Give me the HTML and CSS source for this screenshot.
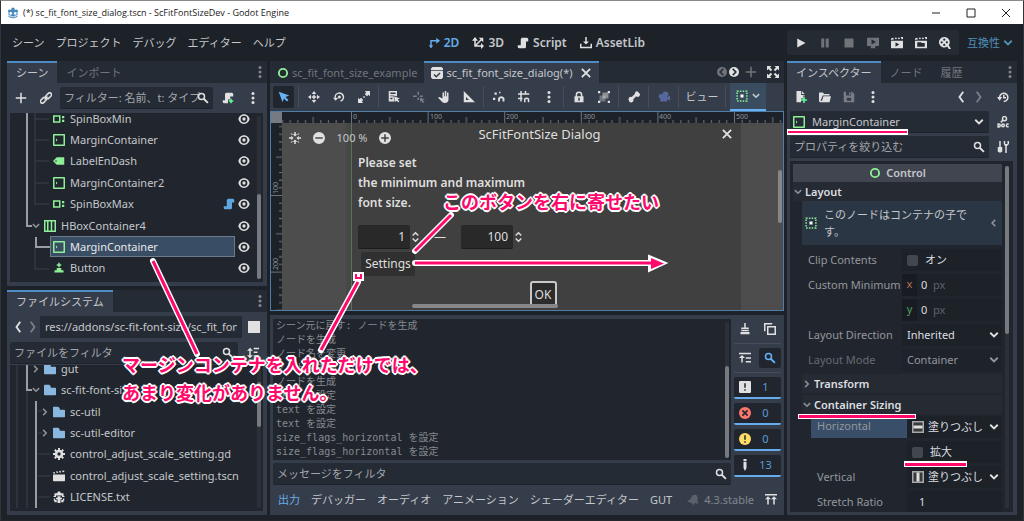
FILE: index.html
```html
<!DOCTYPE html>
<html lang="ja">
<head>
    <meta charset="UTF-8">
    <meta name="viewport" content="width=device-width, initial-scale=1.0">
    <title>(*) sc_fit_font_size_dialog.tscn - ScFitFontSizeDev - Godot Engine</title>
    <link rel="stylesheet" href="styles.css">
</head>
<body>
    <!-- icon sprite -->
    <svg class="sprite" aria-hidden="true">
        <symbol id="godot" viewBox="0 0 16 16"><path fill="#478cbf" d="M1 5l2-2 1 1 2-1V1h4v2l2 1 1-1 2 2-1 2v6q-6 4-12 0V7z"/><circle cx="5" cy="8.500" r="1.800" fill="#fff"/><circle cx="11" cy="8.500" r="1.800" fill="#fff"/><path stroke="#fff" d="M1.500 11.500h3v1.500h7v-1.500h3" fill="none"/></symbol>
        <symbol id="plus" viewBox="0 0 16 16"><path d="M7 1h2v6h6v2H9v6H7V9H1V7h6z"/></symbol>
        <symbol id="link" viewBox="0 0 16 16"><g fill="none" stroke="currentColor" stroke-width="2"><rect x="7" y="2.500" width="9" height="5" rx="2.500" transform="rotate(-45 11.500 5)"/><rect x="0" y="8.500" width="9" height="5" rx="2.500" transform="rotate(-45 4.500 11)"/><path d="M6 10l4-4"/></g></symbol>
        <symbol id="search" viewBox="0 0 16 16"><circle cx="6" cy="6" r="4" fill="none" stroke="currentColor" stroke-width="2"/><path d="M9 9l5.500 5.500" stroke="currentColor" stroke-width="2.500"/></symbol>
        <symbol id="dots" viewBox="0 0 16 16"><circle cx="8" cy="2" r="2"/><circle cx="8" cy="8" r="2"/><circle cx="8" cy="14" r="2"/></symbol>
        <symbol id="script" viewBox="0 0 16 16"><path d="M6 1v1a1 1 0 0 0-1 1v8H1v2a2 2 0 0 0 2 2h7a2 2 0 0 0 2-2V6h3V3a2 2 0 0 0-2-2z"/></symbol>
        <symbol id="script-add" viewBox="0 0 16 16"><path d="M6 1a2 2 0 0 0-2 2v8H1v2a2 2 0 0 0 2 2h5v-5h3V6h4V3a2 2 0 0 0-2-2z"/><path fill="#5fff97" d="M11 9h2v2h2v2h-2v2h-2v-2H9v-2h2z"/></symbol>
        <symbol id="eye" viewBox="0 0 16 16"><path fill-rule="evenodd" d="M8 1.500C4 1.500 1 5 .500 8 1 11 4 14.500 8 14.500s7-3.500 7.500-6.500C15 5 12 1.500 8 1.500zm0 2a4.500 4.500 0 0 1 0 9 4.500 4.500 0 0 1 0-9z"/><circle cx="8" cy="8" r="2.200"/></symbol>
        <symbol id="spinbox" viewBox="0 0 16 16"><path fill-rule="evenodd" d="M0 3v10h10V3zm2 2h6v6H2zM12 4h3v3h-3zM12 9h3v3h-3z"/></symbol>
        <symbol id="margin" viewBox="0 0 16 16"><path fill-rule="evenodd" d="M1 0Q0 0 0 1v14q0 1 1 1h14q1 0 1-1V1q0-1-1-1zm1 2h12v12H2zM4 6v4l2-2z"/></symbol>
        <symbol id="label" viewBox="0 0 16 16"><path fill-rule="evenodd" d="M5 3L0 8l5 5h10V3zM4 7a1 1 0 0 1 0 2 1 1 0 0 1 0-2z"/></symbol>
        <symbol id="hbox" viewBox="0 0 16 16"><path fill-rule="evenodd" d="M0 0v16h16V0zm2 2h2v12H2zm4 0h3v12H6zm5 0h3v12h-3z"/></symbol>
        <symbol id="button" viewBox="0 0 16 16"><path d="M7 1h2v2h2v2H9v2H7V5H5V3h2zM5 8h6v3h3v3H2v-3h3z"/></symbol>
        <symbol id="down" viewBox="0 0 16 16"><path d="M3 5l5 5 5-5" fill="none" stroke="currentColor" stroke-width="2.500"/></symbol>
        <symbol id="right" viewBox="0 0 16 16"><path d="M5 3l5 5-5 5" fill="none" stroke="currentColor" stroke-width="2.500"/></symbol>
        <symbol id="left" viewBox="0 0 16 16"><path d="M10 3L5 8l5 5" fill="none" stroke="currentColor" stroke-width="2.500"/></symbol>
        <symbol id="prev" viewBox="0 0 16 16"><path d="M11 1L6 8l5 7" fill="none" stroke="currentColor" stroke-width="2.500"/></symbol>
        <symbol id="next" viewBox="0 0 16 16"><path d="M5 1l5 7-5 7" fill="none" stroke="currentColor" stroke-width="2.500"/></symbol>
        <symbol id="square" viewBox="0 0 16 16"><path d="M0 0h16v16H0z"/></symbol>
        <symbol id="sort" viewBox="0 0 16 16"><path d="M4 1L0 5h3v6H0l4 4 4-4H5V5h3zM9 1h7v2H9zM9 6h5v2H9zM9 11h3v2H9z"/></symbol>
        <symbol id="folder" viewBox="0 0 16 16"><path d="M1 1Q0 1 0 2v12q0 1 1 1h14q1 0 1-1V6q0-1-1-1H9V3L7 1z"/></symbol>
        <symbol id="gear" viewBox="0 0 16 16"><circle cx="8" cy="8" r="4" fill="none" stroke="currentColor" stroke-width="3.500"/><path d="M8 0v3M8 13v3M0 8h3M13 8h3M2.300 2.300l2 2M11.700 11.700l2 2M2.300 13.700l2-2M11.700 4.300l2-2" stroke="currentColor" stroke-width="2.600"/></symbol>
        <symbol id="clapper" viewBox="0 0 16 16"><path d="M0 3l2-.5L3 4.500 1 5zM4 2l2-.5 1 2-2 .5zM8 1.500l2-.5 1 2-2 .5zM12 1l3-.5v2l-2 .5zM0 6h16v8q0 1-1 1H1q-1 0-1-1z"/></symbol>
        <symbol id="text" viewBox="0 0 16 16"><path d="M8 0L5 3H2v3L0 8h4V6h8v2h4l-2-2V3h-3zM6 7h4v2h2v2h-2v5H6v-5H4V9h2zM1 10h2v2h2v3H2v-2H1zM13 10h2v3h-1v2h-3v-3h2z"/></symbol>
        <symbol id="two-d" viewBox="0 0 16 16"><path d="M4 14V5h8" fill="none" stroke="currentColor" stroke-width="2"/><path d="M1 11h6l-3 4zM11 1l5 4-5 4z"/></symbol>
        <symbol id="three-d" viewBox="0 0 16 16"><path d="M4 3v9h9M4 12l9-9" fill="none" stroke="currentColor" stroke-width="2"/><path d="M0 5l4-5 4 5zM12 8l4 4-4 4zM9 1h6v6z"/></symbol>
        <symbol id="asset" viewBox="0 0 16 16"><path d="M7 0h2v6h3l-4 4-4-4h3zM0 9h2v4h12V9h2v6H0z"/></symbol>
        <symbol id="play" viewBox="0 0 16 16"><path d="M3 2v12l11-6z"/></symbol>
        <symbol id="pause" viewBox="0 0 16 16"><path d="M3 2h4v12H3zM9 2h4v12H9z"/></symbol>
        <symbol id="stop" viewBox="0 0 16 16"><path d="M2 2h12v12H2z"/></symbol>
        <symbol id="remote" viewBox="0 0 16 16"><path d="M0 1h16v11H0z"/><path d="M6 3l6 3.500L6 10z" fill="#252b33"/><path d="M5 12h6v3H5z"/></symbol>
        <symbol id="play-scene" viewBox="0 0 16 16"><path fill-rule="evenodd" d="M0 2l3-1 1 2-4 1zM5 1l2-.5 1 2-2 .5zM9 1l2-.5 1 2-2 .5zM13 0l3-.5v3l-2 .5zM0 5h16v10H0zm6 2v6l5-3z"/></symbol>
        <symbol id="play-custom" viewBox="0 0 16 16"><path fill-rule="evenodd" d="M0 2l3-1 1 2-4 1zM5 1l2-.5 1 2-2 .5zM9 1l2-.5 1 2-2 .5zM13 0l3-.5v3l-2 .5zM0 5h16v10H0zm3 2v6h10V8H9L8 7z"/></symbol>
        <symbol id="movie" viewBox="0 0 16 16"><path fill-rule="evenodd" d="M7 0a7 7 0 1 0 4 12.700l2 3.300h3l-3-5A7 7 0 0 0 7 0zm0 2a1.500 1.500 0 0 1 0 3 1.500 1.500 0 0 1 0-3zM3.500 5.500a1.500 1.500 0 0 1 0 3 1.500 1.500 0 0 1 0-3zm7 0a1.500 1.500 0 0 1 0 3 1.500 1.500 0 0 1 0-3zM7 9a1.500 1.500 0 0 1 0 3 1.500 1.500 0 0 1 0-3z"/></symbol>
        <symbol id="ring" viewBox="0 0 16 16"><circle cx="8" cy="8" r="5.500" fill="none" stroke="currentColor" stroke-width="2.500"/></symbol>
        <symbol id="dialog" viewBox="0 0 16 16"><path d="M2 0h12l2 2v2H0V2zM0 5h16v9l-2 2H2l-2-2z"/><path d="M4 10l3 3 5-5" fill="none" stroke="#363d4a" stroke-width="2"/></symbol>
        <symbol id="close" viewBox="0 0 16 16"><path d="M2.500 2.500l11 11M13.500 2.500l-11 11" stroke="currentColor" stroke-width="2.500"/></symbol>
        <symbol id="c-left" viewBox="0 0 16 16"><circle cx="8" cy="8" r="8"/><path d="M10 3L5 8l5 5" fill="none" stroke="#252b34" stroke-width="2.500"/></symbol>
        <symbol id="c-right" viewBox="0 0 16 16"><circle cx="8" cy="8" r="8"/><path d="M6 3l5 5-5 5" fill="none" stroke="#252b34" stroke-width="2.500"/></symbol>
        <symbol id="full" viewBox="0 0 16 16"><path d="M0 0h6L4 2l3 3-2 2-3-3-2 2zM16 0v6l-2-2-3 3-2-2 3-3-2-2zM0 16v-6l2 2 3-3 2 2-3 3 2 2zM16 16h-6l2-2-3-3 2-2 3 3 2-2z"/></symbol>
        <symbol id="cursor" viewBox="0 0 16 16"><path d="M1 1l14 5-5 2 4 4-2 2-4-4-2 5z"/></symbol>
        <symbol id="move" viewBox="0 0 16 16"><path d="M8 0l3 4H5zM8 16l-3-4h6zM0 8l4-3v6zM16 8l-4 3V5zM7 5h2v6H7zM5 7h6v2H5z"/></symbol>
        <symbol id="rotate" viewBox="0 0 16 16"><path d="M3 9a5.500 5.500 0 1 1 7 4.500" fill="none" stroke="currentColor" stroke-width="2"/><path d="M0 9h7l-3.500 4z"/><circle cx="8.500" cy="8" r="2"/></symbol>
        <symbol id="scale" viewBox="0 0 16 16"><path d="M9 0h7v7l-2-2-2 2-3-3 2-2zM0 16V9l2 2 2-2 3 3-2 2 2 2zM7 7h2v2H7z"/></symbol>
        <symbol id="list" viewBox="0 0 16 16"><path fill-rule="evenodd" d="M1 0h11v7L7 6l2 8H1zm2 2v2h7V2zm0 4v1h4V6zm0 3v2h3V9zM8 7l8 3-3 1 2 3-1 1-3-2-1 2z"/></symbol>
        <symbol id="pivot" viewBox="0 0 16 16"><path d="M6 1h2v4H6zM0 6h5v2H0zM9 6h4v2H9zM6 9h2v3H6zM9 9l7 2-3 1 2 3-2 1-2-3-1 2z"/></symbol>
        <symbol id="hand" viewBox="0 0 16 16"><path d="M6 2h2v5h1V0h2v7h1V2h2v9q0 5-5 5-3 0-5-3L0 9l2-1 4 2z"/></symbol>
        <symbol id="ruler" viewBox="0 0 16 16"><path fill-rule="evenodd" d="M1 0v15h15zm3 8l4 4H4z"/></symbol>
        <symbol id="snap" viewBox="0 0 16 16"><path d="M2 2h3v3H2zM0 9h3v3H0zM8 1h2v2H8z"/><path d="M8 14v-4a3.500 3.500 0 0 1 6 0v4" fill="none" stroke="currentColor" stroke-width="2.500"/></symbol>
        <symbol id="grid" viewBox="0 0 16 16"><path d="M4 0v14M10 0v5M0 4h15M0 10h6M9 15v-4a3 3 0 0 1 5 0v4" fill="none" stroke="currentColor" stroke-width="2"/></symbol>
        <symbol id="lock" viewBox="0 0 16 16"><path d="M4.500 8V5a3.500 3.500 0 0 1 7 0v3" fill="none" stroke="currentColor" stroke-width="2"/><path fill-rule="evenodd" d="M2 7h12v8H2zm5 2v4h2V9z"/></symbol>
        <symbol id="group" viewBox="0 0 16 16"><path d="M0 0h3v3H0zM13 0h3v3h-3zM0 13h3v3H0zM13 13h3v3h-3z"/><path opacity=".35" d="M2 6h8v8H2z"/><path opacity=".5" d="M6 2h8v8H6z"/></symbol>
        <symbol id="bone" viewBox="0 0 16 16"><path d="M10 1a3 3 0 0 1 4 1 3 3 0 0 1 1 5 3 3 0 0 1-4 0l-4 4a3 3 0 0 1-4 4 3 3 0 0 1-2-3 3 3 0 0 1 4-4l4-4z"/></symbol>
        <symbol id="camera" viewBox="0 0 16 16"><path d="M9 1a3 3 0 0 1 3 6v1l4-2v7l-4-2v3H3v-4a3 3 0 1 1 3-5 3 3 0 0 1 3-4z"/></symbol>
        <symbol id="anchor" viewBox="0 0 16 16"><path d="M1.500 1.500h13v13h-13z" fill="none" stroke="#8eef97" stroke-width="2" stroke-dasharray="2 1.700"/><path fill="#fff" d="M6 6h4v4H6z"/></symbol>
        <symbol id="center" viewBox="0 0 16 16"><path d="M0 7h3V5l3 3-3 3V9H0zM16 7h-3V5l-3 3 3 3V9h3zM7 0h2v3h2L8 6 5 3h2zM7 16h2v-3h2l-3-3-3 3h2zM2 2h2l1 2H4zM14 2h-2l-1 2h1zM2 14h2l1-2H4zM14 14h-2l-1-2h1z"/></symbol>
        <symbol id="minus-c" viewBox="0 0 16 16"><path fill-rule="evenodd" d="M8 0a8 8 0 0 0 0 16A8 8 0 0 0 8 0zM3 7h10v2H3z"/></symbol>
        <symbol id="plus-c" viewBox="0 0 16 16"><path fill-rule="evenodd" d="M8 0a8 8 0 0 0 0 16A8 8 0 0 0 8 0zM7 3h2v4h4v2H9v4H7V9H3V7h4z"/></symbol>
        <symbol id="updown" viewBox="0 0 10 16"><path d="M1 6l4-4 4 4M1 10l4 4 4-4" fill="none" stroke="currentColor" stroke-width="2"/></symbol>
        <symbol id="broom" viewBox="0 0 16 16"><path d="M7 0h2v6h4v2H3V6h4zM3 9h10v2H3zM2 12h12v3H2z"/></symbol>
        <symbol id="copy" viewBox="0 0 16 16"><path d="M1 11V1h10M5 5h10v10H5z" fill="none" stroke="currentColor" stroke-width="2"/></symbol>
        <symbol id="collapse" viewBox="0 0 16 16"><path d="M0 1h16v2H0zM4 4l4 4H5v6H3V8H0zM9 7h7v2H9zM9 12h7v2H9z"/></symbol>
        <symbol id="msg" viewBox="0 0 16 16"><path fill-rule="evenodd" d="M1 0h14l1 1v14l-1 1H1l-1-1V1zm6 3v6h2V3zm0 8v2h2v-2z"/></symbol>
        <symbol id="err" viewBox="0 0 16 16"><circle cx="8" cy="8" r="8" fill="#ff786b"/><path d="M4.500 4.500l7 7M11.500 4.500l-7 7" stroke="#21262e" stroke-width="2.200"/></symbol>
        <symbol id="warn" viewBox="0 0 16 16"><circle cx="8" cy="8" r="8" fill="#ffdd65"/><path d="M7 3h2v6H7zM7 11h2v2H7z" fill="#21262e"/></symbol>
        <symbol id="info" viewBox="0 0 16 16"><path d="M6 0h4v3H6zM6 4h4v8l-2 4-2-4z"/></symbol>
        <symbol id="bell" viewBox="0 0 16 16"><path d="M7 2q6-3 7 2v5l1 4-5-1-1 3-3-3-6-2q5-2 7-8z"/></symbol>
        <symbol id="expand" viewBox="0 0 16 16"><path d="M0 0h16v2H0zM4 3l4 4H5v7H3V7H0zM12 3l4 4h-3v7h-2V7H8z"/></symbol>
        <symbol id="file-new" viewBox="0 0 16 16"><path d="M2 0v15h6v-5h3V7h2V6L8 5V0zM9 0v4h4z"/><path fill="#5fff97" d="M11 8h2v3h3v2h-3v3h-2v-3H8v-2h3z"/></symbol>
        <symbol id="file-open" viewBox="0 0 16 16"><path d="M0 2h5l2 2h7v2H5l-3 7h11l3-6-2 8H2q-2 0-2-2zM6 7h10l-2 6H4z"/></symbol>
        <symbol id="save" viewBox="0 0 16 16"><path fill-rule="evenodd" d="M1 1h11l3 3v11H1zm3 0v5h7V1zM5 9v4h6V9zM8 2h2v3H8z"/></symbol>
        <symbol id="history" viewBox="0 0 16 16"><path d="M3.500 9A5.500 5.500 0 1 1 9 14M9 5v4h3" fill="none" stroke="currentColor" stroke-width="2"/><path d="M0 8h7l-3.500 5z"/></symbol>
        <symbol id="doc" viewBox="0 0 16 16"><g fill="none" stroke="currentColor" stroke-width="2"><circle cx="10" cy="3.500" r="2.700"/><path d="M8 5.500L5 8.500"/><path d="M1.500 10.500h1q1.800 0 1.800 2t-1.800 2h-1z"/><circle cx="8" cy="12.500" r="1.700"/><path d="M15.500 11q-3-1-3 1.500t3 1.500"/></g></symbol>
        <symbol id="tools" viewBox="0 0 16 16"><path d="M3 0h2v8h2v6q-3 3-6 0V8h2zM9 0v4l2 3v9h2V7l3-3V0h-2v4h-3V0z"/></symbol>
        <symbol id="fill-h" viewBox="0 0 16 16"><path d="M1 1h14v14H1z" fill="#3a3a3a" stroke="#a8a8a8" stroke-width="2"/><path d="M2 6h12v4H2z"/></symbol>
        <symbol id="fill-v" viewBox="0 0 16 16"><path d="M1 1h14v14H1z" fill="#3a3a3a" stroke="#a8a8a8" stroke-width="2"/><path d="M6 2h4v12H6z"/></symbol>
        <symbol id="w-min" viewBox="0 0 16 16"><path d="M4 8h8" stroke="currentColor"/></symbol>
        <symbol id="w-max" viewBox="0 0 16 16"><path d="M4 4h8v8H4z" fill="none" stroke="currentColor"/></symbol>
        <symbol id="w-close" viewBox="0 0 16 16"><path d="M4 4l8 8M12 4l-8 8" stroke="currentColor"/></symbol>
    </svg>

    <div class="window">
        <header class="titlebar">
            <svg class="icon"><use href="#godot"/></svg>
            <span class="title">(*) sc_fit_font_size_dialog.tscn - ScFitFontSizeDev - Godot Engine</span>
            <button aria-label="最小化"><svg><use href="#w-min"/></svg></button>
            <button aria-label="最大化"><svg><use href="#w-max"/></svg></button>
            <button aria-label="閉じる"><svg><use href="#w-close"/></svg></button>
        </header>

        <div class="menubar">
            <nav class="menus">
                <button>シーン</button>
                <button>プロジェクト</button>
                <button>デバッグ</button>
                <button>エディター</button>
                <button>ヘルプ</button>
            </nav>
            <nav class="modes">
                <button class="active"><svg class="icon"><use href="#two-d"/></svg>2D</button>
                <button><svg class="icon"><use href="#three-d"/></svg>3D</button>
                <button><svg class="icon"><use href="#script"/></svg>Script</button>
                <button><svg class="icon"><use href="#asset"/></svg>AssetLib</button>
            </nav>
            <div class="run">
                <div class="run-box">
                    <button aria-label="実行"><svg class="icon"><use href="#play"/></svg></button>
                    <button aria-label="一時停止" class="dim"><svg class="icon"><use href="#pause"/></svg></button>
                    <button aria-label="停止" class="dim"><svg class="icon"><use href="#stop"/></svg></button>
                    <button aria-label="リモート" class="dim"><svg class="icon"><use href="#remote"/></svg></button>
                    <button aria-label="シーンを実行"><svg class="icon"><use href="#play-scene"/></svg></button>
                    <button aria-label="カスタム実行"><svg class="icon"><use href="#play-custom"/></svg></button>
                    <button aria-label="ムービー"><svg class="icon"><use href="#movie"/></svg></button>
                </div>
                <button class="renderer">互換性<svg class="icon"><use href="#down"/></svg></button>
            </div>
        </div>

        <main class="editor">
            <!-- left docks -->
            <div class="column left">
                <section class="dock">
                    <div class="tabs">
                        <button class="tab active">シーン</button>
                        <button class="tab">インポート</button>
                        <button class="more" aria-label="メニュー"><svg class="icon"><use href="#dots"/></svg></button>
                    </div>
                    <div class="panel">
                        <div class="toolbar">
                            <button aria-label="追加"><svg class="icon"><use href="#plus"/></svg></button>
                            <button aria-label="インスタンス化"><svg class="icon"><use href="#link"/></svg></button>
                            <label class="field">
                                <input type="text" aria-label="フィルター" placeholder="フィルター: 名前、t: タイプ">
                                <svg class="icon"><use href="#search"/></svg>
                            </label>
                            <button aria-label="スクリプト"><svg class="icon"><use href="#script-add"/></svg></button>
                            <button aria-label="その他"><svg class="icon"><use href="#dots"/></svg></button>
                        </div>
                        <div class="tree">
                            <div class="rows nodes">
                                <svg class="guides">
                                    <path class="faint" d="M25 0v97M25 11h14M25 32h14M25 53h14M25 75h14M25 96h14M25 139v22h14"/>
                                    <path class="strong" d="M17 0v118h5M26 129v10h14"/>
                                </svg>
                                <div class="row"><span class="item"><svg class="icon green"><use href="#spinbox"/></svg>SpinBoxMin</span><svg class="icon"><use href="#eye"/></svg></div>
                                <div class="row"><span class="item"><svg class="icon green"><use href="#margin"/></svg>MarginContainer</span><svg class="icon"><use href="#eye"/></svg></div>
                                <div class="row"><span class="item"><svg class="icon green"><use href="#label"/></svg>LabelEnDash</span><svg class="icon"><use href="#eye"/></svg></div>
                                <div class="row"><span class="item"><svg class="icon green"><use href="#margin"/></svg>MarginContainer2</span><svg class="icon"><use href="#eye"/></svg></div>
                                <div class="row"><span class="item"><svg class="icon green"><use href="#spinbox"/></svg>SpinBoxMax</span><svg class="icon blue"><use href="#script"/></svg><svg class="icon"><use href="#eye"/></svg></div>
                                <div class="row parent"><svg class="fold"><use href="#down"/></svg><span class="item"><svg class="icon green"><use href="#hbox"/></svg>HBoxContainer4</span><svg class="icon"><use href="#eye"/></svg></div>
                                <div class="row"><span class="item selected"><svg class="icon green"><use href="#margin"/></svg>MarginContainer</span><svg class="icon"><use href="#eye"/></svg></div>
                                <div class="row"><span class="item"><svg class="icon green"><use href="#button"/></svg>Button</span><svg class="icon"><use href="#eye"/></svg></div>
                            </div>
                            <div class="scroll"><span class="thumb low"></span></div>
                        </div>
                    </div>
                </section>

                <section class="dock">
                    <div class="tabs">
                        <button class="tab active">ファイルシステム</button>
                        <button class="more" aria-label="メニュー"><svg class="icon"><use href="#dots"/></svg></button>
                    </div>
                    <div class="panel">
                        <div class="toolbar path">
                            <button aria-label="戻る"><svg class="icon"><use href="#prev"/></svg></button>
                            <button aria-label="進む" class="dim"><svg class="icon"><use href="#next"/></svg></button>
                            <input type="text" aria-label="パス" value="res://addons/sc-fit-font-size/sc_fit_fon">
                            <button aria-label="分割"><svg class="icon"><use href="#square"/></svg></button>
                        </div>
                        <div class="toolbar filter">
                            <label class="field">
                                <input type="text" aria-label="ファイルをフィルタ" placeholder="ファイルをフィルタ">
                                <svg class="icon"><use href="#search"/></svg>
                            </label>
                            <button aria-label="並べ替え"><svg class="icon"><use href="#sort"/></svg></button>
                        </div>
                        <div class="tree">
                            <div class="rows files">
                                <svg class="guides">
                                    <path class="faint" d="M7 0v150M17 32v118M28 53h4M28 75h4M28 96h12M28 118h12M28 139h12"/>
                                    <path class="strong" d="M17 0v32h5M26 43v108"/>
                                </svg>
                                <div class="row parent"><svg class="fold"><use href="#right"/></svg><span class="item"><svg class="icon folder"><use href="#folder"/></svg>gut</span></div>
                                <div class="row parent"><svg class="fold"><use href="#down"/></svg><span class="item"><svg class="icon folder"><use href="#folder"/></svg>sc-fit-font-size</span></div>
                                <div class="row sub"><svg class="fold"><use href="#right"/></svg><span class="item"><svg class="icon folder"><use href="#folder"/></svg>sc-util</span></div>
                                <div class="row sub"><svg class="fold"><use href="#right"/></svg><span class="item"><svg class="icon folder"><use href="#folder"/></svg>sc-util-editor</span></div>
                                <div class="row"><span class="item"><svg class="icon"><use href="#gear"/></svg>control_adjust_scale_setting.gd</span></div>
                                <div class="row"><span class="item"><svg class="icon"><use href="#clapper"/></svg>control_adjust_scale_setting.tscn</span></div>
                                <div class="row"><span class="item"><svg class="icon"><use href="#text"/></svg>LICENSE.txt</span></div>
                            </div>
                            <div class="scroll"><span class="thumb files-thumb"></span></div>
                        </div>
                    </div>
                </section>
            </div>

            <!-- 2D view and output -->
            <div class="column center">
                <section class="dock">
                    <div class="tabs">
                        <button class="tab"><svg class="icon green"><use href="#ring"/></svg>sc_fit_font_size_example</button>
                        <button class="tab active"><svg class="icon"><use href="#dialog"/></svg>sc_fit_font_size_dialog(*)<svg class="icon close"><use href="#close"/></svg></button>
                        <div class="tab-tools">
                            <button aria-label="前のタブ" class="dim"><svg class="icon small"><use href="#c-left"/></svg></button>
                            <button aria-label="次のタブ"><svg class="icon small"><use href="#c-right"/></svg></button>
                            <button aria-label="新しいシーン" class="dim wide"><svg class="icon"><use href="#plus"/></svg></button>
                            <button aria-label="集中モード" class="wide"><svg class="icon"><use href="#full"/></svg></button>
                        </div>
                    </div>
                    <div class="canvas-tools">
                        <button class="on" aria-label="選択"><svg class="icon"><use href="#cursor"/></svg></button>
                        <i class="sep"></i>
                        <button aria-label="移動"><svg class="icon"><use href="#move"/></svg></button>
                        <button aria-label="回転"><svg class="icon"><use href="#rotate"/></svg></button>
                        <button aria-label="スケール"><svg class="icon"><use href="#scale"/></svg></button>
                        <i class="sep"></i>
                        <button aria-label="リスト選択"><svg class="icon"><use href="#list"/></svg></button>
                        <button aria-label="ピボット" class="dim"><svg class="icon"><use href="#pivot"/></svg></button>
                        <button aria-label="パン"><svg class="icon"><use href="#hand"/></svg></button>
                        <button aria-label="定規"><svg class="icon"><use href="#ruler"/></svg></button>
                        <i class="sep"></i>
                        <button aria-label="スマートスナップ"><svg class="icon"><use href="#snap"/></svg></button>
                        <button aria-label="グリッドスナップ"><svg class="icon"><use href="#grid"/></svg></button>
                        <button aria-label="スナップ設定"><svg class="icon"><use href="#dots"/></svg></button>
                        <i class="sep"></i>
                        <button aria-label="ロック"><svg class="icon"><use href="#lock"/></svg></button>
                        <button aria-label="グループ"><svg class="icon"><use href="#group"/></svg></button>
                        <i class="sep"></i>
                        <button aria-label="ボーン"><svg class="icon"><use href="#bone"/></svg></button>
                        <i class="sep"></i>
                        <button aria-label="カメラ" class="camera"><svg class="icon"><use href="#camera"/></svg></button>
                        <i class="sep"></i>
                        <button class="view">ビュー</button>
                        <i class="sep"></i>
                        <button class="anchor" aria-label="コンテナのサイズ"><svg class="icon"><use href="#anchor"/></svg><svg class="fold"><use href="#down"/></svg></button>
                    </div>
                    <div class="viewport">
                        <div class="corner"></div>
                        <svg class="ruler-h">
                            <defs>
                                <pattern id="ticks-h" x="69" width="76.600" height="11" patternUnits="userSpaceOnUse">
                                    <path d="M.500 0v11M38.800 5v6M8.200 8v3M15.800 8v3M23.500 8v3M31.100 8v3M46.500 8v3M54.100 8v3M61.800 8v3M69.400 8v3" stroke="#6d737c"/>
                                </pattern>
                            </defs>
                            <rect width="100%" height="11" fill="url(#ticks-h)"/>
                            <text x="71" y="7">0</text>
                            <text x="148" y="7">100</text>
                            <text x="224" y="7">200</text>
                            <text x="301" y="7">300</text>
                            <text x="377" y="7">400</text>
                            <text x="454" y="7">500</text>
                        </svg>
                        <svg class="ruler-v">
                            <defs>
                                <pattern id="ticks-v" y="72" width="11" height="76.600" patternUnits="userSpaceOnUse">
                                    <path d="M0 .500h11M5 38.800h6M8 8.200h3M8 15.800h3M8 23.500h3M8 31.100h3M8 46.500h3M8 54.100h3M8 61.800h3M8 69.400h3" stroke="#6d737c"/>
                                </pattern>
                            </defs>
                            <rect width="11" height="100%" fill="url(#ticks-v)"/>
                            <text transform="translate(7 71) rotate(-90)">100</text>
                            <text transform="translate(7 147) rotate(-90)">200</text>
                        </svg>
                        <div class="canvas">
                            <div class="dialog">
                                <div class="dialog-head"><h2>ScFitFontSize Dialog</h2><button aria-label="閉じる"><svg class="icon"><use href="#close"/></svg></button></div>
                                <p>Please set<br>the minimum and maximum<br>font size.</p>
                                <div class="spins">
                                    <input type="text" value="1" aria-label="最小"><svg class="updown"><use href="#updown"/></svg>
                                    <span class="dash">—</span>
                                    <input type="text" value="100" aria-label="最大"><svg class="updown"><use href="#updown"/></svg>
                                </div>
                                <button class="settings">Settings</button>
                                <button class="ok">OK</button>
                            </div>
                            <div class="zoom">
                                <button aria-label="中央"><svg class="icon"><use href="#center"/></svg></button>
                                <button aria-label="縮小"><svg class="icon"><use href="#minus-c"/></svg></button>
                                <span>100 %</span>
                                <button aria-label="拡大表示"><svg class="icon"><use href="#plus-c"/></svg></button>
                            </div>
                            <div class="bar-v"></div>
                            <div class="bar-h"></div>
                        </div>
                    </div>
                </section>

                <section class="output">
                    <div class="log-area">
                        <div class="log">
                            <div class="log-text">シーン元に戻す: ノードを生成<br>ノードを生成<br>ノード名を変更<br>ノードを生成<br>ノードを生成<br>text を設定<br>text を設定<br>text を設定<br>size_flags_horizontal を設定<br>size_flags_horizontal を設定</div>
                            <div class="scroll"><span class="thumb low"></span></div>
                        </div>
                        <label class="field">
                            <input type="text" aria-label="メッセージをフィルタ" placeholder="メッセージをフィルタ">
                            <svg class="icon"><use href="#search"/></svg>
                        </label>
                    </div>
                    <div class="log-side">
                        <div class="pair">
                            <button aria-label="クリア"><svg class="icon"><use href="#broom"/></svg></button>
                            <button aria-label="コピー"><svg class="icon"><use href="#copy"/></svg></button>
                        </div>
                        <div class="pair">
                            <button aria-label="折りたたむ"><svg class="icon"><use href="#collapse"/></svg></button>
                            <button aria-label="検索" class="on"><svg class="icon"><use href="#search"/></svg></button>
                        </div>
                        <button class="count"><svg class="icon"><use href="#msg"/></svg><span>1</span></button>
                        <button class="count"><svg class="icon"><use href="#err"/></svg><span>0</span></button>
                        <button class="count"><svg class="icon"><use href="#warn"/></svg><span>0</span></button>
                        <button class="count"><svg class="icon"><use href="#info"/></svg><span>13</span></button>
                    </div>
                    <nav class="bottom-tabs">
                        <button class="active">出力</button>
                        <button>デバッガー</button>
                        <button>オーディオ</button>
                        <button>アニメーション</button>
                        <button>シェーダーエディター</button>
                        <button>GUT</button>
                        <span class="version"><svg class="icon"><use href="#bell"/></svg>4.3.stable</span>
                        <button aria-label="展開"><svg class="icon"><use href="#expand"/></svg></button>
                    </nav>
                </section>
            </div>

            <!-- inspector -->
            <div class="column right">
                <section class="dock">
                    <div class="tabs">
                        <button class="tab active">インスペクター</button>
                        <button class="tab">ノード</button>
                        <button class="tab">履歴</button>
                        <button class="more" aria-label="メニュー"><svg class="icon"><use href="#dots"/></svg></button>
                    </div>
                    <div class="panel">
                        <div class="toolbar res">
                            <button aria-label="新規"><svg class="icon"><use href="#file-new"/></svg></button>
                            <button aria-label="開く"><svg class="icon"><use href="#file-open"/></svg></button>
                            <button aria-label="保存" class="dim"><svg class="icon"><use href="#save"/></svg></button>
                            <button aria-label="その他"><svg class="icon"><use href="#dots"/></svg></button>
                            <span class="grow"></span>
                            <div class="history">
                                <button aria-label="戻る"><svg class="icon"><use href="#prev"/></svg></button>
                                <button aria-label="進む" class="dim"><svg class="icon"><use href="#next"/></svg></button>
                            </div>
                            <button aria-label="履歴"><svg class="icon"><use href="#history"/></svg></button>
                        </div>
                        <div class="toolbar object">
                            <label class="field object-select">
                                <svg class="icon green"><use href="#margin"/></svg>
                                <select aria-label="オブジェクト"><option>MarginContainer</option></select>
                                <svg class="icon"><use href="#down"/></svg>
                            </label>
                            <button aria-label="ドキュメント"><svg class="icon"><use href="#doc"/></svg></button>
                        </div>
                        <div class="toolbar props">
                            <label class="field">
                                <input type="text" aria-label="プロパティを絞り込む" placeholder="プロパティを絞り込む">
                                <svg class="icon"><use href="#search"/></svg>
                            </label>
                            <button aria-label="ツール"><svg class="icon"><use href="#tools"/></svg></button>
                        </div>
                        <div class="inspector">
                            <div class="props-list">
                                <div class="category"><svg class="icon green"><use href="#ring"/></svg>Control</div>
                                <div class="group"><svg class="fold"><use href="#down"/></svg>Layout</div>
                                <div class="hint"><svg class="icon"><use href="#anchor"/></svg><span>このノードはコンテナの子です。</span><svg class="fold"><use href="#left"/></svg></div>
                                <div class="prop"><label for="clip">Clip Contents</label><div class="value"><input type="checkbox" id="clip"><span>オン</span></div></div>
                                <div class="prop"><label for="min-x">Custom Minimum</label><div class="value num"><b class="x">x</b><input type="text" id="min-x" value="0"><span>px</span></div></div>
                                <div class="prop"><span></span><div class="value num"><b class="y">y</b><input type="text" aria-label="Custom Minimum y" value="0"><span>px</span></div></div>
                                <div class="prop"><label for="dir">Layout Direction</label><div class="value"><select id="dir"><option>Inherited</option></select><svg class="icon"><use href="#down"/></svg></div></div>
                                <div class="prop off"><label for="mode">Layout Mode</label><div class="value"><select id="mode" disabled><option>Container</option></select><svg class="icon"><use href="#down"/></svg></div></div>
                                <div class="group inner"><svg class="fold"><use href="#right"/></svg>Transform</div>
                                <div class="group inner"><svg class="fold"><use href="#down"/></svg>Container Sizing</div>
                                <div class="prop deep"><label class="picked" for="hor">Horizontal</label><div class="value"><svg class="icon"><use href="#fill-h"/></svg><select id="hor"><option>塗りつぶし</option></select><svg class="icon"><use href="#down"/></svg></div></div>
                                <div class="prop deep"><span></span><div class="value"><input type="checkbox" id="expand-h"><label for="expand-h">拡大</label></div></div>
                                <div class="prop deep"><label for="ver">Vertical</label><div class="value"><svg class="icon"><use href="#fill-v"/></svg><select id="ver"><option>塗りつぶし</option></select><svg class="icon"><use href="#down"/></svg></div></div>
                                <div class="prop deep"><label for="ratio">Stretch Ratio</label><div class="value"><input type="text" id="ratio" value="1"></div></div>
                            </div>
                            <div class="scroll"><span class="thumb top"></span></div>
                        </div>
                    </div>
                </section>
            </div>
        </main>
    </div>

    <!-- notes over the editor -->
    <div class="notes">
        <svg>
            <g class="outline">
                <path d="M153 261l44 93M358 282l-37 68M415 251l36-36M415 263h236"/>
                <path class="thin" d="M649 256l17 7-17 8z"/>
            </g>
            <path class="ink" d="M153 261l44 93M358 282l-37 68M415 251l36-36M415 263h236"/>
            <path class="solid" d="M651 258l13 5.500-13 5.500z"/>
            <path fill="#fff" d="M353 272h11v9h-11zM787 129h121v6H787zM798 414h118v5H798zM904 461h63v6h-63z"/>
            <path class="solid" d="M355 274h2v3h3v-3h2v5h-7zM788 131h119v2H788zM799 415h116v3H799zM905 463h61v3h-61z"/>
        </svg>
        <p class="note first">このボタンを右に寄せたい</p>
        <p class="note second">マージンコンテナを入れただけでは、<br>あまり変化がありません。</p>
    </div>
</body>
</html>
```
FILE: styles.css
```css
* {
    box-sizing: border-box;
}
body {
    margin: 0;
    background-color: #1d2229;
    color: #c4c7cb;
    font-family: "Noto Sans", "Noto Sans CJK JP", sans-serif;
    font-size: 11px;
    line-height: 16px;
}
button, input, select {
    font: inherit;
    color: inherit;
    background: none;
    border: none;
    padding: 0;
    margin: 0;
    min-width: 0;
}
button {
    display: flex;
    align-items: center;
    justify-content: center;
    flex: none;
    white-space: nowrap;
}
select {
    appearance: none;
}
svg {
    fill: currentColor;
}
.sprite {
    position: absolute;
    width: 0;
    height: 0;
}
.icon {
    width: 12px;
    height: 12px;
    flex: none;
    color: #e0e0e0;
}
.icon.small {
    width: 10px;
    height: 10px;
}
.fold {
    width: 10px;
    height: 10px;
    flex: none;
    color: #8d9298;
}
.icon.green {
    color: #8eef97;
}
.icon.blue {
    color: #5fa5e0;
}
.icon.folder {
    color: #89b7e0;
}
.dim {
    opacity: 0.4;
}
.grow {
    flex: 1;
}

/* window */
.window {
    display: flex;
    flex-direction: column;
    height: 100vh;
    border: 1px solid #8a8a8a;
    border-color: #8a8a8a #30353c #23262b;
    overflow: hidden;
}
.titlebar {
    display: flex;
    align-items: center;
    height: 23px;
    flex: none;
    padding-left: 6px;
    background-color: #fff;
    color: #222;
    font-family: "Open Sans", sans-serif;
    font-size: 9px;
}
.titlebar .title {
    flex: 1;
    padding-left: 4px;
}
.titlebar button {
    width: 35px;
}
.titlebar button svg {
    width: 16px;
    height: 16px;
}
.menubar {
    display: flex;
    align-items: center;
    justify-content: space-between;
    height: 37px;
    flex: none;
    padding: 0 9px 0 11px;
}
.menus {
    display: flex;
    gap: 11px;
}
.modes {
    display: flex;
    gap: 13px;
    font-size: 12px;
    font-weight: 600;
}
.modes button {
    gap: 4px;
}
.modes .active, .modes .active .icon, .bottom-tabs .active {
    color: #66acec;
}
.run {
    display: flex;
    align-items: center;
    gap: 8px;
}
.run-box {
    display: flex;
    height: 25px;
    padding: 0 2px;
    background-color: #252b33;
    border-radius: 2px;
}
.run-box button {
    width: 24px;
}
.renderer, .renderer .icon {
    color: #4f8fb8;
}
.renderer {
    gap: 2px;
}

/* docks */
.editor {
    display: grid;
    grid-template-columns: 260px minmax(0, 1fr) 230px;
    gap: 3px;
    flex: 1;
    min-height: 0;
    padding: 0 6px 5px;
}
.column {
    display: grid;
    gap: 4px;
    min-height: 0;
}
.left {
    grid-template-rows: minmax(0, 1fr) minmax(0, 1fr);
}
.center {
    grid-template-rows: minmax(0, 1fr) 200px;
}
.dock {
    display: flex;
    flex-direction: column;
    min-height: 0;
    min-width: 0;
}
.tabs {
    display: flex;
    height: 22px;
    flex: none;
    background-color: #252b34;
}
.tab {
    padding: 0 9px;
    gap: 3px;
    color: #70757c;
    border-top: 2px solid transparent;
}
.tab.active {
    color: #c4c7cb;
    background-color: #363d4a;
    border-top-color: #4f8cc4;
}
.center .tab {
    padding: 0 7px;
}
.tab .close {
    margin-left: 4px;
}
.more {
    width: 14px;
    margin-left: auto;
    opacity: 0.5;
}
.tab-tools {
    display: flex;
    margin-left: auto;
}
.tab-tools button {
    width: 12px;
}
.tab-tools .wide {
    width: 22px;
}
.panel {
    display: flex;
    flex-direction: column;
    flex: 1;
    min-height: 0;
    padding: 0 4px 4px 3px;
    background-color: #363d4a;
}
.toolbar {
    display: flex;
    align-items: center;
    gap: 4px;
    height: 30px;
    flex: none;
}
.toolbar button {
    width: 21px;
    height: 21px;
}
.field {
    display: flex;
    align-items: center;
    flex: 1;
    min-width: 0;
    height: 22px;
    padding: 0 4px;
    background-color: #252b34;
    border-bottom: 1px solid #1f242b;
    border-radius: 2px;
}
.field input, .field select {
    flex: 1;
}
.field input + .icon {
    margin-left: -6px;
}
input::placeholder {
    color: #a2a6ac;
    opacity: 1;
}
.toolbar.path {
    gap: 0;
    height: 29px;
    padding-right: 3px;
}
.path button {
    width: 15px;
}
.path input {
    flex: 1;
    height: 22px;
    padding: 0 5px;
    background-color: #252b34;
}
.path button:last-child {
    width: 18px;
    justify-content: flex-end;
}
.toolbar.filter {
    height: 24px;
}

/* trees */
.tree {
    display: flex;
    align-items: flex-end;
    flex: 1;
    min-height: 0;
    padding-bottom: 3px;
    background-color: #21262e;
    overflow: hidden;
}
.rows {
    position: relative;
    display: grid;
    grid-auto-rows: 1fr;
    flex: 1;
    min-width: 0;
}
.nodes {
    height: 171px;
}
.files {
    height: 150px;
}
.guides {
    position: absolute;
    width: 42px;
    height: 100%;
    fill: none;
}
.guides .faint {
    stroke: #3c4149;
}
.guides .strong {
    stroke: #9a9da1;
    stroke-width: 2;
}
.row {
    display: flex;
    align-items: center;
    gap: 6px;
    min-height: 0;
    padding-left: 40px;
}
.row.parent {
    padding-left: 21px;
    gap: 0;
}
.row.sub {
    padding-left: 30px;
    gap: 0;
}
.item {
    display: flex;
    align-items: center;
    gap: 5px;
    flex: 1;
    min-width: 0;
    height: 21px;
    padding-left: 3px;
    white-space: nowrap;
}
.item.selected {
    background-color: #394e64;
    border: 1px solid #6c7c8d;
    color: #e8e9ea;
    padding-left: 2px;
}
.nodes .row {
    padding-right: 7px;
    gap: 3px;
}
.nodes .row.parent {
    gap: 0;
}
.scroll {
    position: relative;
    align-self: stretch;
    width: 4px;
    margin: 3px 2px 0 0;
    background-color: #2b3038;
}
.thumb {
    position: absolute;
    left: 0;
    right: 0;
    border-radius: 2px;
    background-color: #777a7f;
}
.thumb.low {
    top: 48%;
    bottom: 0;
}
.output .thumb.low {
    top: 32%;
}
.files-thumb {
    top: 10%;
    height: 32%;
}
.thumb.top {
    top: 0;
    height: 49%;
}

/* 2D view */
.canvas-tools {
    display: flex;
    align-items: center;
    gap: 4px;
    height: 28px;
    flex: none;
    padding-left: 3px;
    background-color: #363d4a;
    overflow: hidden;
}
.canvas-tools button {
    width: 21px;
    height: 22px;
}
.canvas-tools .on, .pair .on {
    background-color: #21262e;
    border-radius: 2px;
}
.on .icon {
    color: #66b2f5;
}
.camera .icon {
    color: #56689b;
}
.canvas-tools .view {
    width: 38px;
}
.canvas-tools .anchor {
    width: 36px;
    height: 28px;
    gap: 3px;
    background-color: #394c60;
    border-bottom: 2px solid #66b2f5;
}
.anchor .fold {
    color: #c4c7cb;
}
.sep {
    width: 1px;
    height: 22px;
    flex: none;
    background-color: #474e5a;
}
.viewport {
    display: grid;
    grid-template-columns: 11px minmax(0, 1fr);
    grid-template-rows: 11px minmax(0, 1fr);
    flex: 1;
    min-height: 0;
    border: 1px solid #4f7ea8;
    background-color: #1d2229;
}
.corner {
    background-color: #767b81;
}
.ruler-h, .ruler-v {
    width: 100%;
    height: 100%;
}
.ruler-h text, .ruler-v text {
    font-size: 7px;
    fill: #8f9399;
}
.canvas {
    position: relative;
    display: flex;
    min-height: 0;
    padding: 0 42px 0 69px;
    background: linear-gradient(90deg, transparent 64px, #474747 64px, #474747 70px, transparent 70px) #4d4d4d;
    overflow: hidden;
}
.dialog {
    display: flex;
    flex-direction: column;
    flex: 1;
    padding-left: 6px;
    background-color: #404040;
    border-left: 1px solid #587555;
    color: #dfdfdf;
    font-size: 12px;
}
.dialog-head {
    display: flex;
    align-items: center;
    height: 22px;
    flex: none;
    padding-right: 8px;
}
.dialog h2 {
    flex: 1;
    margin: 0;
    font-size: 13px;
    font-weight: 400;
    text-align: center;
}
.dialog p {
    margin: 0;
    padding: 8px 0 6px;
    font-weight: 600;
    line-height: 20px;
}
.spins {
    display: flex;
    align-items: center;
    margin-top: 6px;
}
.spins input {
    width: 52px;
    height: 24px;
    padding: 0 5px;
    background-color: #292929;
    border-bottom: 1px solid #1c1c1c;
    border-radius: 2px;
    text-align: right;
}
.updown {
    width: 7px;
    height: 12px;
    margin-left: 2px;
}
.dash {
    width: 42px;
    text-align: center;
}
.dialog .settings {
    width: 54px;
    height: 24px;
    margin: 3px 0 0 3px;
    background-color: #303030;
    border-radius: 2px;
    align-self: flex-start;
}
.dialog .ok {
    align-self: center;
    width: 27px;
    height: 27px;
    margin: 5px 13px 0 0;
    background-color: #2c2c2c;
    border: 2px solid #c8c8c8;
    border-radius: 3px;
}
.zoom {
    position: absolute;
    top: 7px;
    left: 7px;
    display: flex;
    align-items: center;
    gap: 12px;
}
.zoom span {
    width: 34px;
    margin: 0 -2px 0 -2px;
    text-align: center;
}
.bar-v, .bar-h {
    position: absolute;
    border-radius: 2px;
    background-color: #878787;
}
.bar-v {
    top: 47px;
    right: 1px;
    width: 4px;
    height: 53px;
}
.bar-h {
    bottom: 2px;
    left: 130px;
    width: 146px;
    height: 4px;
}

/* output */
.output {
    display: grid;
    grid-template-columns: minmax(0, 1fr) 47px;
    grid-template-rows: minmax(0, 1fr) 30px;
    column-gap: 3px;
    padding: 4px 3px 0;
    background-color: #363d4a;
}
.log-area {
    display: flex;
    flex-direction: column;
    gap: 3px;
    min-height: 0;
}
.log-area .field {
    flex: none;
}
.log {
    display: flex;
    flex: 1;
    min-height: 0;
    padding-bottom: 2px;
    background-color: #21262e;
}
.log-text {
    flex: 1;
    padding: 0 3px;
    font-family: "DejaVu Sans Mono", "Noto Sans CJK JP", monospace;
    font-size: 10px;
    line-height: 14px;
    color: #868a90;
    overflow: hidden;
}
.log-side {
    display: flex;
    flex-direction: column;
    gap: 4px;
}
.pair {
    display: flex;
    justify-content: space-between;
    height: 25px;
    padding-bottom: 4px;
    border-bottom: 1px solid #474e5a;
}
.pair button {
    width: 22px;
}
.count {
    justify-content: flex-start;
    width: 47px;
    height: 22px;
    padding-left: 5px;
    background-color: #21262e;
    border-bottom: 2px solid #66acec;
    border-radius: 2px;
    color: #5b9bd5;
}
.count span {
    flex: 1;
    padding-right: 1px;
    text-align: center;
}
.bottom-tabs {
    grid-column: span 2;
    display: flex;
    gap: 11px;
    padding: 0 4px 0 5px;
    white-space: nowrap;
}
.version {
    display: flex;
    align-items: center;
    gap: 5px;
    margin-left: auto;
    color: #81868f;
}
.version .icon {
    color: #5b616b;
}

/* inspector */
.right .panel {
    padding-bottom: 3px;
}
.toolbar.res {
    height: 28px;
}
.toolbar.res, .toolbar.object, .toolbar.props {
    gap: 3px;
}
.history {
    display: flex;
    padding-right: 1px;
}
.history button {
    width: 18px;
}
.toolbar.object {
    height: 22px;
}
.toolbar.props {
    height: 28px;
}
.object-select {
    padding-left: 3px;
    gap: 7px;
}
.inspector {
    display: flex;
    flex: 1;
    min-height: 0;
    padding: 3px 3px 0;
    background-color: #21262e;
    overflow: hidden;
}
.props-list {
    flex: 1;
    min-width: 0;
}
.inspector .scroll {
    margin: 2px 1px 4px 3px;
}
.category {
    display: flex;
    align-items: center;
    justify-content: center;
    gap: 5px;
    height: 18px;
    background-color: #414550;
    font-weight: 600;
}
.group {
    display: flex;
    align-items: center;
    gap: 2px;
    height: 19px;
    background-color: #262b33;
    color: #dcdee0;
    font-weight: 600;
}
.group.inner {
    margin: 0 0 2px 9px;
}
.hint {
    display: flex;
    align-items: center;
    gap: 7px;
    height: 44px;
    margin: 0 0 4px 9px;
    padding: 0 3px;
    background-color: #2a3644;
    line-height: 17px;
}
.hint span {
    flex: 1;
    padding-right: 12px;
}
.prop {
    display: grid;
    grid-template-columns: minmax(0, 1fr) 100px;
    align-items: center;
    height: 22px;
    margin: 0 0 3px 9px;
    color: #94979c;
}
.prop > label {
    padding-left: 6px;
    white-space: nowrap;
}
.prop.deep {
    grid-template-columns: minmax(0, 1fr) 95px;
    margin-left: 18px;
}
.prop .picked {
    height: 22px;
    line-height: 20px;
    background-color: #394e68;
}
.prop.off {
    opacity: 0.6;
}
.value {
    display: flex;
    align-items: center;
    gap: 4px;
    height: 22px;
    padding: 0 2px 0 5px;
    background-color: #1d2128;
    color: #dcdee0;
}
.value select {
    flex: 1;
    opacity: 1;
}
.value input[type="checkbox"] {
    appearance: none;
    width: 11px;
    height: 11px;
    margin-right: 3px;
    background-color: #42464f;
    border-radius: 2px;
}
.value input[type="text"] {
    width: 20px;
    padding-left: 7px;
}
.value.num {
    padding-left: 0;
}
.value.num input[type="text"] {
    width: 8px;
    padding: 0;
}
.value b {
    width: 15px;
    height: 22px;
    background-color: #181b21;
    font-weight: 400;
    line-height: 20px;
    text-align: center;
}
.value .x {
    color: #b37358;
}
.value .y {
    color: #55a068;
}
.num span {
    color: #5d6168;
}

/* notes */
.notes {
    position: absolute;
    top: 0;
    left: 0;
    width: 100%;
    height: 100%;
    overflow: hidden;
    pointer-events: none;
}
.notes svg {
    position: absolute;
    width: 100%;
    height: 100%;
    fill: none;
}
.outline path {
    stroke: #fff;
    stroke-width: 6;
    stroke-linecap: round;
}
.outline .thin {
    stroke-width: 2;
    fill: #fff;
}
.ink {
    stroke: #ff0a6c;
    stroke-width: 3;
}
.notes .solid {
    fill: #ff0a6c;
}
.note {
    position: absolute;
    margin: 0;
    color: #ff0a6c;
    font-size: 18px;
    font-weight: 700;
    line-height: 28px;
    white-space: nowrap;
    text-shadow: 2px 0 #fff, -2px 0 #fff, 0 2px #fff, 0 -2px #fff,
        1px 1px #fff, -1px 1px #fff, 1px -1px #fff, -1px -1px #fff;
}
.first {
    top: 188px;
    left: 443px;
}
.second {
    top: 351px;
    left: 122px;
}
```
